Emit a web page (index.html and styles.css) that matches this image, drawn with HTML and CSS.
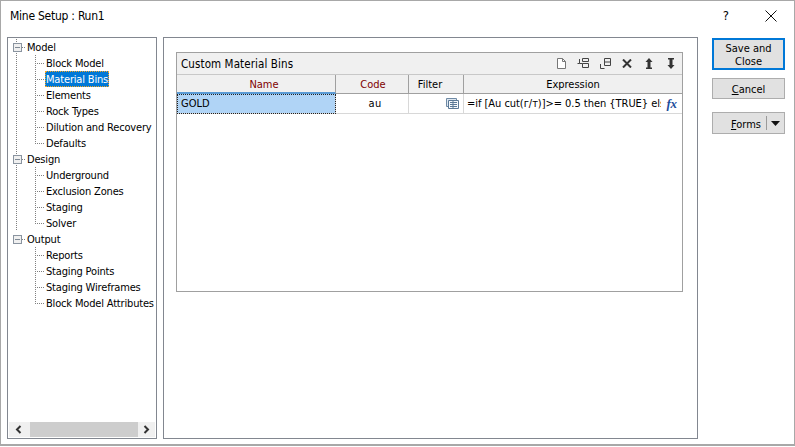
FILE: index.html
```html
<!DOCTYPE html>
<html lang="en">
<head>
<meta charset="utf-8">
<title>Mine Setup : Run1</title>
<link rel="stylesheet" href="styles.css">
</head>
<body>
<div class="window">
  <header class="titlebar">
    <span class="title">Mine Setup : Run1</span>
    <span class="help">?</span>
    <svg class="close" width="12" height="12" viewBox="0 0 12 12"><path d="M.5.5l11 11M11.500.5l-11 11" stroke="#111" fill="none"/></svg>
  </header>
  <div class="content">
    <nav class="tree">
      <div class="tree-body">
        <section class="group spine">
          <div class="root"><span class="box"></span><span class="stub"></span><span class="label">Model</span></div>
          <div class="leaf"><span class="tick"></span><span class="label">Block Model</span></div>
          <div class="leaf"><span class="tick"></span><span class="label selected">Material Bins</span></div>
          <div class="leaf"><span class="tick"></span><span class="label">Elements</span></div>
          <div class="leaf"><span class="tick"></span><span class="label">Rock Types</span></div>
          <div class="leaf"><span class="tick"></span><span class="label">Dilution and Recovery</span></div>
          <div class="leaf"><span class="tick last"></span><span class="label">Defaults</span></div>
        </section>
        <section class="group spine">
          <div class="root"><span class="box"></span><span class="stub"></span><span class="label">Design</span></div>
          <div class="leaf"><span class="tick"></span><span class="label">Underground</span></div>
          <div class="leaf"><span class="tick"></span><span class="label">Exclusion Zones</span></div>
          <div class="leaf"><span class="tick"></span><span class="label">Staging</span></div>
          <div class="leaf"><span class="tick last"></span><span class="label">Solver</span></div>
        </section>
        <section class="group">
          <div class="root"><span class="box"></span><span class="stub"></span><span class="label">Output</span></div>
          <div class="leaf"><span class="tick"></span><span class="label">Reports</span></div>
          <div class="leaf"><span class="tick"></span><span class="label">Staging Points</span></div>
          <div class="leaf"><span class="tick"></span><span class="label">Staging Wireframes</span></div>
          <div class="leaf"><span class="tick last"></span><span class="label">Block Model Attributes</span></div>
        </section>
      </div>
      <div class="hscroll">
        <svg class="arrow" width="21" height="15" viewBox="0 0 21 15"><path d="M11.500 4l-3.500 3.500 3.500 3.500" stroke="#333" stroke-width="2" fill="none"/></svg>
        <span class="thumb"></span>
        <svg class="arrow" width="17" height="15" viewBox="0 0 17 15"><path d="M6.500 4l3.500 3.500-3.500 3.500" stroke="#333" stroke-width="2" fill="none"/></svg>
      </div>
    </nav>
    <main class="panel">
      <div class="bins">
        <div class="bins-head">
          <span class="bins-title">Custom Material Bins</span>
          <div class="tools">
            <svg width="9" height="11" viewBox="0 0 9 11"><path d="M.5.500h5l3 3v7h-8z" fill="#fff" stroke="#777"/><path d="M5.500.500v3h3" fill="none" stroke="#777"/></svg>
            <svg width="12" height="11" viewBox="0 0 12 11"><path d="M5.500.500h6v3h-6zM5.500 5.500h6v4h-6z" fill="none" stroke="#444"/><path d="M2.500 1v4.500h3" fill="none" stroke="#444"/><path d="M.5 5.500h2" stroke="#444"/></svg>
            <svg class="tool-tight" width="12" height="11" viewBox="0 0 12 11"><path d="M5.500.500h6v7h-6zM5.500 4h6" fill="none" stroke="#444"/><path d="M1.500 6v4.500h4" fill="none" stroke="#444"/></svg>
            <svg width="10" height="9" viewBox="0 0 10 9"><path d="M1 .5l8 8M9 .5l-8 8" stroke="#333" stroke-width="2" fill="none"/></svg>
            <svg class="tool-up" width="8" height="11" viewBox="0 0 8 11"><path d="M4 0l3.500 4H5.500v5.500H7V11H1V9.500h1.500V4H.5z" fill="#333"/></svg>
            <svg class="tool-down" width="8" height="11" viewBox="0 0 8 11"><path d="M4 11l3.500-4H5.500V1.500H7V0H1v1.500h1.500V7H.5z" fill="#333"/></svg>
          </div>
        </div>
        <div class="grid">
          <div class="hcell name-head req">Name</div>
          <div class="hcell code-head req">Code</div>
          <div class="hcell filter-head">Filter</div>
          <div class="hcell">Expression</div>
          <div class="cell gold">GOLD</div>
          <div class="cell code">au</div>
          <div class="cell filter">
            <svg width="13" height="11" viewBox="0 0 13 11"><path d="M.5.500h10v8H.5z" fill="#dfe8f1" stroke="#6f8aa5"/><path d="M2.500 2.500h10v8h-10z" fill="#f4f8fc" stroke="#5a7896"/><path d="M4 4.500h7M4 6.500h7M4 8.500h7M7 3v7" stroke="#5a7896"/></svg>
          </div>
          <div class="cell expr"><span class="expr-text">=if [Au cut(г/т)]&gt;= 0.5 then {TRUE} else {FALSE}</span><span class="fx">fx</span></div>
        </div>
      </div>
    </main>
    <aside class="actions">
      <button class="btn primary">Save and Close</button>
      <button class="btn cancel"><u>C</u>ancel</button>
      <div class="btn forms"><span class="forms-label"><u>F</u>orms</span><span class="forms-split"><svg width="9" height="5" viewBox="0 0 9 5"><path d="M0 0h9L4.500 5z" fill="#111"/></svg></span></div>
    </aside>
  </div>
</div>
</body>
</html>
```
FILE: styles.css
```css
* { box-sizing: border-box; }
html, body { margin: 0; padding: 0; }
body {
  width: 795px;
  height: 447px;
  overflow: hidden;
  background: #fff;
  font-family: "DejaVu Sans Condensed", "DejaVu Sans", sans-serif;
  font-stretch: condensed;
  font-size: 11px;
  color: #000;
}
.window {
  width: 795px;
  height: 446px;
  border: 1px solid #a8a8a8;
  border-bottom-width: 2px;
  display: flex;
  flex-direction: column;
}
.titlebar {
  height: 36px;
  flex: none;
  display: flex;
  align-items: center;
  padding: 0 17px 7px 9px;
}
.title { font-size: 12px; letter-spacing: -0.25px; flex: 1; }
.help { font-size: 13px; margin-right: 36px; }
.content {
  flex: 1;
  display: flex;
  padding: 0 0 7px 6px;
}
.tree {
  width: 150px;
  border: 1px solid #828790;
  display: flex;
  flex-direction: column;
  margin-right: 6px;
}
.tree-body { flex: 1; padding-top: 1px; }
.spine {
  background: linear-gradient(#808080 50%, transparent 50%) 8px 0 / 1px 2px repeat-y;
}
.root, .leaf { height: 16px; display: flex; align-items: center; }
.root { padding-left: 5px; }
.leaf { padding-left: 27px; }
.box {
  width: 9px;
  height: 9px;
  border: 1px solid #8a94a0;
  background: linear-gradient(#7f8a96, #7f8a96) center / 5px 1px no-repeat, #f0f0f0;
  flex: none;
}
.stub {
  width: 4px;
  height: 1px;
  background: linear-gradient(90deg, #808080 50%, transparent 50%) 0 0 / 2px 1px repeat-x;
  flex: none;
}
.tick {
  width: 10px;
  height: 16px;
  flex: none;
  background:
    linear-gradient(#808080 50%, transparent 50%) 0 0 / 1px 2px repeat-y,
    repeating-linear-gradient(90deg, #808080 0 1px, transparent 1px 2px) 0 8px / 10px 1px no-repeat;
}
.tick.last {
  background:
    repeating-linear-gradient(180deg, #808080 0 1px, transparent 1px 2px) 0 0 / 1px 9px no-repeat,
    repeating-linear-gradient(90deg, #808080 0 1px, transparent 1px 2px) 0 8px / 10px 1px no-repeat;
}
.label {
  height: 16px;
  line-height: 17px;
  padding: 0 1px;
  white-space: nowrap;
  letter-spacing: -0.17px;
}
.selected {
  background: #0078d7;
  color: #fff;
  outline: 1px dotted #f5a623;
  outline-offset: -1px;
}
.hscroll {
  height: 15px;
  margin: 0 1px 1px;
  background: #f0f0f0;
  display: flex;
  flex: none;
}
.arrow { flex: none; display: block; }
.thumb { flex: 1; background: #cdcdcd; }
.panel {
  width: 535px;
  border: 1px solid #828790;
  padding: 14px 14px 146px 12px;
}
.bins {
  height: 240px;
  border: 1px solid #a0a0a0;
}
.bins-head {
  height: 22px;
  background: #f0f0f0;
  display: flex;
  align-items: center;
  padding: 0 7px 0 4px;
  border-bottom: 1px solid #c8c8c8;
}
.bins-title { flex: 1; font-size: 11.500px; letter-spacing: 0.1px; }
.tools { display: flex; align-items: center; gap: 11px; }
.tools svg { display: block; }
.tools .tool-tight { margin-left: -1px; }
.tools .tool-up { margin-left: 2px; }
.tools .tool-down { margin-left: 3px; }
.grid {
  display: grid;
  grid-template-columns: 159px 73px 55px 1fr;
  grid-template-rows: 19px 20px;
}
.hcell {
  background: #f0f0f0;
  border-right: 1px solid #a0a0a0;
  border-bottom: 1px solid #a0a0a0;
  text-align: center;
  line-height: 20px;
}
.hcell:nth-child(4) { border-right: 0; }
.req { color: #800000; }
.name-head { border-bottom: 2px solid #5b9bd5; padding-left: 16px; }
.code-head { padding-left: 2px; }
.filter-head { padding-right: 12px; }
.cell {
  border-bottom: 1px solid #d8d8d8;
  border-right: 1px solid #d8d8d8;
  line-height: 19px;
  white-space: nowrap;
  overflow: hidden;
}
.gold {
  background: #b0d4f6;
  outline: 1px dotted #222;
  outline-offset: -1px;
  padding-left: 4px;
}
.code { text-align: center; padding-left: 6px; letter-spacing: 0.4px; }
.filter {
  display: flex;
  justify-content: flex-end;
  align-items: center;
  padding-right: 4px;
}
.filter svg { display: block; }
.expr {
  display: flex;
  border-right: 0;
  padding-left: 3px;
}
.expr-text { flex: 1; overflow: hidden; letter-spacing: -0.04px; }
.fx {
  flex: none;
  width: 21px;
  color: #1f4e9c;
  font-family: "Liberation Serif", serif;
  font-style: italic;
  font-weight: bold;
  font-size: 13px;
  letter-spacing: -0.5px;
  text-align: center;
}
.actions {
  width: 73px;
  margin-left: 14px;
  padding-top: 1px;
  display: flex;
  flex-direction: column;
}
.btn {
  width: 73px;
  background: #e1e1e1;
  border: 1px solid #adadad;
  font: inherit;
  color: #000;
  padding: 0;
  text-align: center;
}
.primary {
  height: 32px;
  border: 2px solid #0078d7;
  line-height: 13px;
  padding: 2px 10px 0;
}
.cancel { height: 21px; margin-top: 8px; padding-top: 2px; }
.forms {
  height: 22px;
  margin-top: 13px;
  display: flex;
  align-items: center;
}
.forms-label { flex: 1; text-align: right; padding: 2px 5px 0 0; }
.forms-split {
  width: 18px;
  height: 14px;
  border-left: 1px solid #9a9a9a;
  display: flex;
  align-items: center;
  justify-content: center;
}
```
